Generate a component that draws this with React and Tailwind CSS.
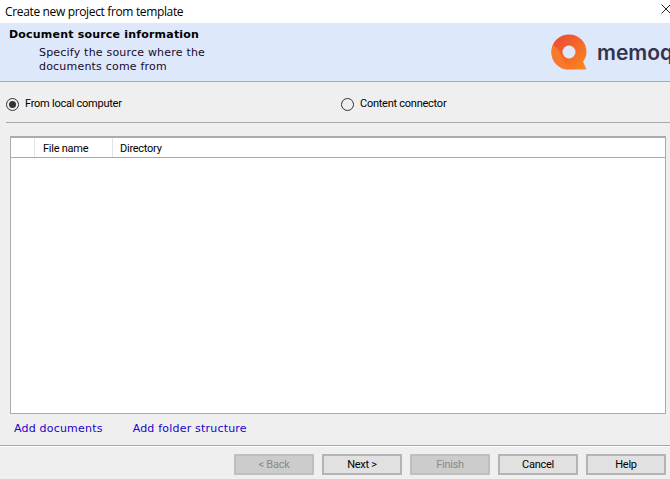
import React from "react";

const title = "font-['Open_Sans',sans-serif] text-[12px] tracking-[-0.35px]";
const segoe = "font-['Roboto',sans-serif] text-[11px] tracking-[-0.25px]";
const verdana = "font-['DejaVu_Sans',sans-serif] text-[11px]";

function WizardButton({ label, disabled }) {
  return (
    <button
      className={`h-[21px] w-[80px] border-2 text-center leading-[17px] ${segoe} ${
        disabled
          ? "border-[#bfbfbf] bg-[#cccccc] text-[#8a8a8a]"
          : "border-[#b4b4b4] bg-[#e1e1e1] text-black"
      }`}
    >
      {label}
    </button>
  );
}

function Radio({ checked, label }) {
  return (
    <div className="flex items-center gap-[6px]">
      <span className="flex h-[13px] w-[13px] items-center justify-center rounded-full border border-[#333333] bg-transparent">
        {checked && <span className="h-[7px] w-[7px] rounded-full bg-[#333333]" />}
      </span>
      <span className={`${segoe} text-black`}>{label}</span>
    </div>
  );
}

function Logo() {
  return (
    <div className="flex items-center gap-[10px]">
      <svg width="36" height="36" viewBox="0 0 36 36" className="shrink-0">
        <defs>
          <linearGradient id="q" x1="0" y1="0" x2="1" y2="1">
            <stop offset="0" stopColor="#ec4437" />
            <stop offset="1" stopColor="#fb8a1e" />
          </linearGradient>
        </defs>
        <path d="M18 0.5C8 0.5 0.5 8 0.5 18S8 35.5 18 35.5H35.5L32 27.5C34.5 24.5 35.5 21.5 35.5 18C35.5 8 28 0.5 18 0.5Z" fill="url(#q)" />
        <path d="M2 11C8 14 11 24 18 35.5C8 35.5 0.5 28 0.5 18C0.5 15 1 13 2 11Z" fill="#f9792a" />
        <circle cx="18" cy="18" r="6.5" fill="#dde8fb" />
      </svg>
      <span className="font-['Inter',sans-serif] text-[21px] font-semibold leading-none text-[#33334d]">
        memoq
      </span>
    </div>
  );
}

export default function App() {
  return (
    <div className="flex h-[479px] w-[670px] flex-col overflow-hidden bg-[#efefef]">
      <div className="flex h-[23px] items-center justify-between bg-white pl-[5px]">
        <span className={`${title} text-black`}>Create new project from template</span>
        <svg width="10" height="10" viewBox="0 0 10 10" className="mb-[6px] mr-[-1px]" stroke="#222222" fill="none">
          <path d="M0.5 0.5L9.5 9.5M9.5 0.5L0.5 9.5" />
        </svg>
      </div>

      <div className="flex h-[59px] overflow-hidden border-b border-[#a9a9a9] bg-[#dde8fb]">
        <div className={`${verdana} w-[551px] shrink-0 pl-[9px] pt-[5px] leading-[14px] text-[#1a0a2a]`}>
          <div className="font-bold tracking-[0.2px] text-black">Document source information</div>
          <div className="ml-[30px] mt-[4px] tracking-[0.2px]">
            Specify the source where the
            <br />
            documents come from
          </div>
        </div>
        <div className="mt-[11px] shrink-0">
          <Logo />
        </div>
      </div>

      <div className="ml-[6px] flex h-[41px] items-center border-b border-[#a9a9a9] pt-[5px]">
        <div className="w-[335px]">
          <Radio checked label="From local computer" />
        </div>
        <Radio label="Content connector" />
      </div>

      <div className="mx-[10px] mt-[13px] flex h-[278px] w-[656px] flex-col border-2 border-b-[1px] border-l-[1px] border-r-[1px] border-[#ababab] bg-white">
        <div className={`flex h-[20px] border-b border-[#a9a9a9] ${segoe} leading-[21px] text-black`}>
          <div className="w-[24px] border-r border-[#e3e3e3]" />
          <div className="w-[78px] border-r border-[#e3e3e3] pl-[8px]">File name</div>
          <div className="pl-[7px]">Directory</div>
        </div>
      </div>

      <div className={`${verdana} ml-[14px] mt-[8px] flex gap-[30px] tracking-[0.2px] leading-[14px] text-[#2200cc]`}>
        <a>Add documents</a>
        <a>Add folder structure</a>
      </div>

      <div className="mt-[9px] flex-1 border-t border-[#a9a9a9] shadow-[inset_0_1px_0_#ffffff]">
        <div className="mr-[4px] mt-[8px] flex justify-end gap-[8px]">
          <WizardButton label="< Back" disabled />
          <WizardButton label="Next >" />
          <WizardButton label="Finish" disabled />
          <WizardButton label="Cancel" />
          <WizardButton label="Help" />
        </div>
      </div>
    </div>
  );
}
